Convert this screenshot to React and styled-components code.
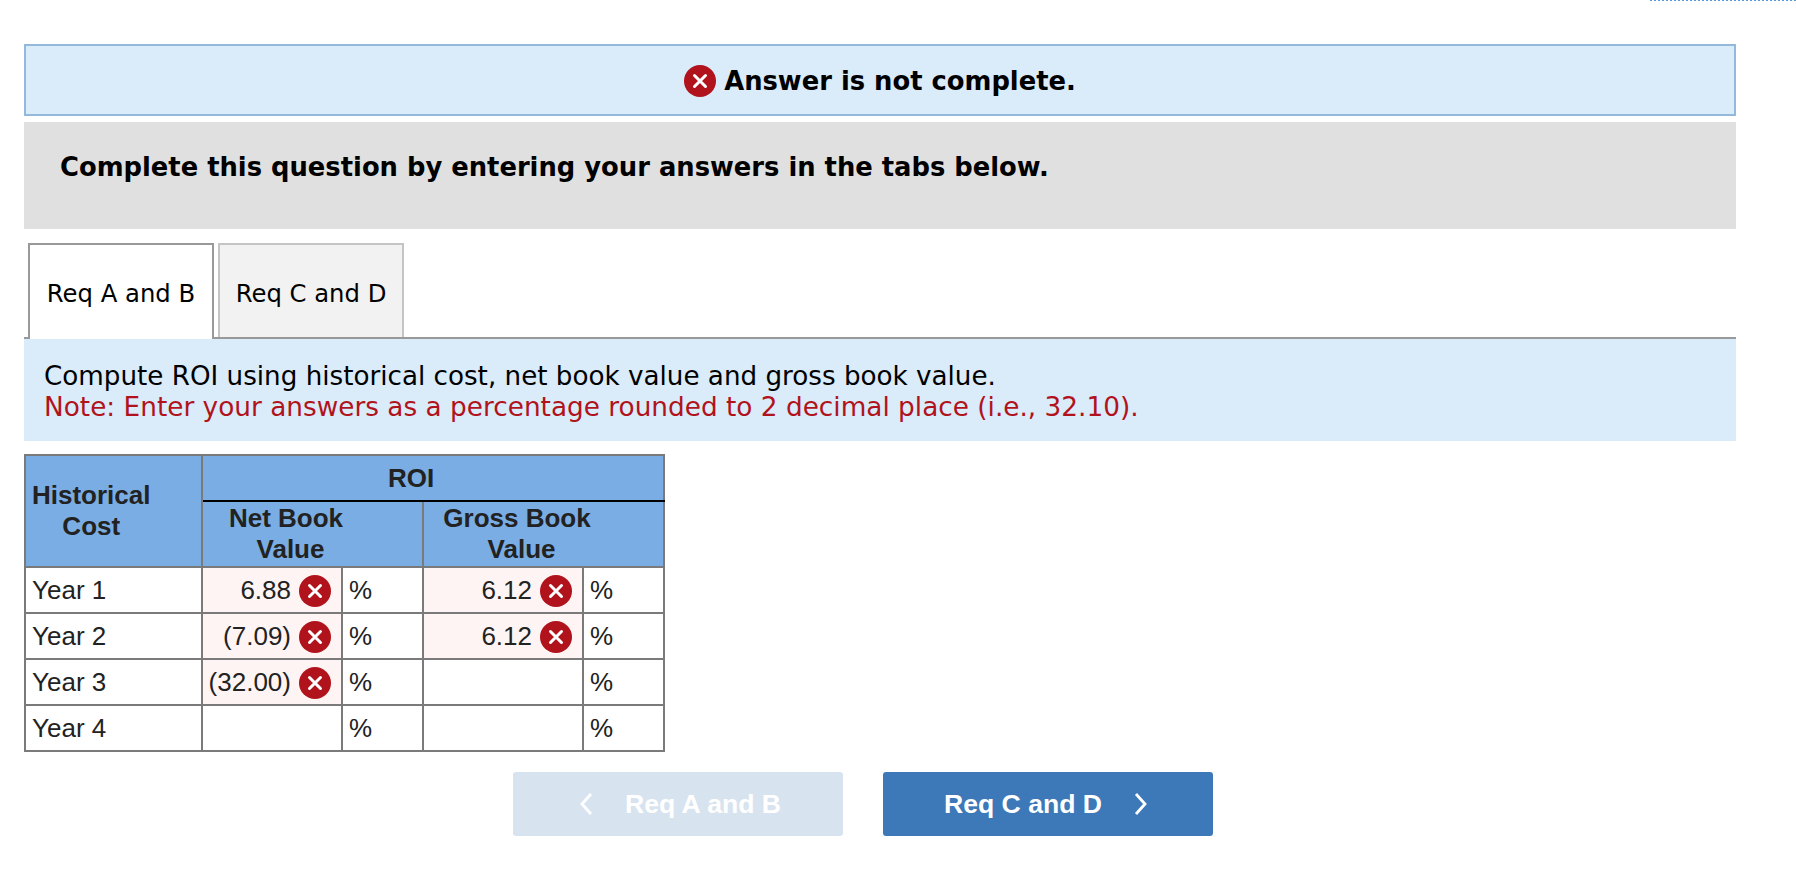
import React from "react";
import styled, { createGlobalStyle } from "styled-components";

const Global = createGlobalStyle`
  html, body { margin: 0; padding: 0; background: #fff; }
  body { font-family: "DejaVu Sans", Verdana, sans-serif; color: #000; }
`;
const Page = styled.div`
  position: relative; width: 1796px; height: 886px; overflow: hidden;
  padding: 44px 60px 0 24px; box-sizing: border-box;
`;
const Dotted = styled.div`
  position: absolute; top: -1px; left: 1650px; right: 0; height: 0;
  border-top: 2px dotted #5b97d8;
`;
const Banner = styled.div`
  height: 72px; box-sizing: border-box; background: #daebfa; border: 2px solid #92b9dc;
  display: flex; align-items: center; justify-content: center; gap: 8px;
  font-size: 25.8px; font-weight: 700; padding-top: 1px;
`;
const Prompt = styled.div`
  margin-top: 6px; height: 107px; box-sizing: border-box; background: #e0e0e0;
  padding: 30px 36px; font-size: 25.8px; font-weight: 700; line-height: 30px;
`;
const Tabs = styled.div`
  display: flex; gap: 4px; margin-top: 14px; padding-left: 4px; height: 96px;
  border-bottom: 2px solid #999; box-sizing: border-box;
`;
const Tab = styled.div`
  width: 186px; box-sizing: border-box; display: flex; align-items: center; justify-content: center;
  font-size: 24.3px; padding-top: ${p => (p.$active ? "2px" : "4px")};
  border: 2px solid ${p => (p.$active ? "#999" : "#c4c4c4")};
  border-bottom: 0;
  background: ${p => (p.$active ? "#fff" : "#f2f2f2")};
  height: ${p => (p.$active ? "96px" : "94px")};
`;
const Instructions = styled.div`
  height: 102px; box-sizing: border-box; background: #daebfa; padding: 22px 20px 0;
  font-size: 26.2px; line-height: 31px;
`;
const Note = styled.div` color: #b1131c; font-size: 26.34px; `;
const Grid = styled.table`
  margin-top: 13px; border-collapse: collapse; table-layout: fixed; width: 639px;
  font-family: "Liberation Sans", Arial, sans-serif; font-size: 26px; color: #222;
  border: 2px solid #7a7a7a;
  td, th { border: 2px solid #7a7a7a; padding: 0; box-sizing: border-box; }
`;
const Head = styled.th`
  background: #7aade3; font-weight: 700; line-height: 31px; vertical-align: middle; text-align: center;
  padding-right: ${p => p.$offset || 0}px !important;
  ${p => p.$line && "border-bottom: 2px solid #000 !important;"}
`;
const StubHead = styled(Head)`
  text-align: left; padding-left: 6px !important;
`;
const StubText = styled.span` display: inline-block; text-align: center; `;
const HeadLine = styled.span` display: inline-block; padding-right: 9px; `;
const Row = styled.tr` height: 46px; `;
const Label = styled.td` padding-left: 6px !important; `;
const Value = styled.td`
  background: ${p => (p.$wrong ? "#fef4f3" : "#fff")};
  text-align: right; padding-right: 10px !important;
`;
const ValueInner = styled.span`
  display: inline-flex; align-items: center; gap: 8px; vertical-align: middle;
`;
const Pct = styled.td` padding-left: 6px !important; `;
const Nav = styled.div`
  display: flex; gap: 40px; margin-top: 20px; padding-left: 489px;
`;
const NavButton = styled.div`
  width: 330px; height: 64px; border-radius: 3px; box-sizing: border-box;
  display: flex; align-items: center; justify-content: center;
  gap: 32px; color: #fff; font-family: "Liberation Sans", Arial, sans-serif; font-size: 26.6px; font-weight: 700;
  background: ${p => (p.$disabled ? "#d8e3f0" : "#3d78b8")};
  ${p => (p.$disabled ? "padding-left: 4px;" : "padding-right: 4px;")}
`;

const XIcon = () => (
  <svg width="32" height="32" viewBox="0 0 32 32" style={{ flex: "none" }}>
    <circle cx="16" cy="16" r="16" fill="#b1131c" />
    <path d="M10.5 10.5 L21.5 21.5 M21.5 10.5 L10.5 21.5" stroke="#fff" strokeWidth="3" strokeLinecap="round" />
  </svg>
);
const Chevron = ({ left }) => (
  <svg width="14" height="22" viewBox="0 0 14 22">
    <path d={left ? "M12 1 L3 11 L12 21" : "M2 1 L11 11 L2 21"} fill="none" stroke="#fff" strokeWidth="2.8" />
  </svg>
);

const rows = [
  ["Year 1", "6.88", "6.12"],
  ["Year 2", "(7.09)", "6.12"],
  ["Year 3", "(32.00)", ""],
  ["Year 4", "", ""],
];
const Cell = ({ v }) => (
  <Value $wrong={!!v}>
    {v && <ValueInner>{v}<XIcon /></ValueInner>}
  </Value>
);

export default function App() {
  return (
    <Page>
      <Global />
      <Dotted />
      <Banner><XIcon />Answer is not complete.</Banner>
      <Prompt>Complete this question by entering your answers in the tabs below.</Prompt>
      <Tabs>
        <Tab $active>Req A and B</Tab>
        <Tab>Req C and D</Tab>
      </Tabs>
      <Instructions>
        Compute ROI using historical cost, net book value and gross book value.
        <Note>Note: Enter your answers as a percentage rounded to 2 decimal place (i.e., 32.10).</Note>
      </Instructions>
      <Grid>
        <colgroup>
          <col style={{ width: 177 }} />
          <col style={{ width: 140 }} />
          <col style={{ width: 81 }} />
          <col style={{ width: 160 }} />
          <col style={{ width: 81 }} />
        </colgroup>
        <thead>
          <tr style={{ height: 46 }}>
            <StubHead rowSpan={2}><StubText>Historical<br />Cost</StubText></StubHead>
            <Head colSpan={4} $line $offset={44}>ROI</Head>
          </tr>
          <tr style={{ height: 66 }}>
            <Head colSpan={2} $offset={44}><HeadLine>Net Book</HeadLine><br />Value</Head>
            <Head colSpan={2} $offset={44}><HeadLine>Gross Book</HeadLine><br />Value</Head>
          </tr>
        </thead>
        <tbody>
          {rows.map(([y, a, b]) => (
            <Row key={y}>
              <Label>{y}</Label>
              <Cell v={a} />
              <Pct>%</Pct>
              <Cell v={b} />
              <Pct>%</Pct>
            </Row>
          ))}
        </tbody>
      </Grid>
      <Nav>
        <NavButton $disabled><Chevron left />Req A and B</NavButton>
        <NavButton>Req C and D<Chevron /></NavButton>
      </Nav>
    </Page>
  );
}
